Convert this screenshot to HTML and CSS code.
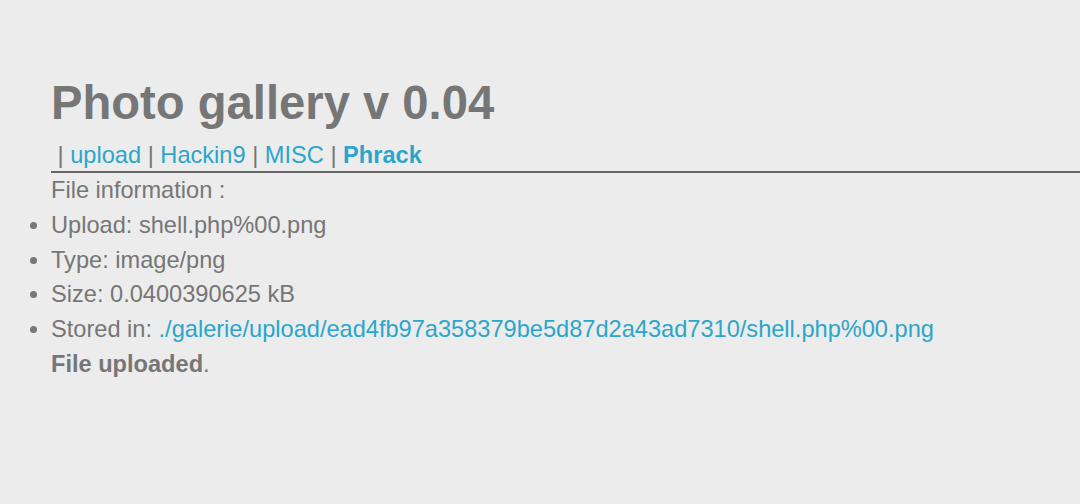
FILE: index.html
```html
<!DOCTYPE html>
<html>
<head>
<meta charset="utf-8">
<link rel="stylesheet" href="styles.css">
<title>Photo gallery</title>
</head>
<body>
<div class="page">
  <h1 class="title">Photo gallery v 0.04</h1>
  <div class="nav">&nbsp;| <a href="#">upload</a> | <a href="#">Hackin9</a> | <a href="#">MISC</a> | <a href="#" class="active">Phrack</a></div>
  <div class="info">File information :</div>
  <ul class="list">
    <li>Upload: shell.php%00.png</li>
    <li>Type: image/png</li>
    <li>Size: 0.0400390625 kB</li>
    <li>Stored in: <a href="#">./galerie/upload/ead4fb97a358379be5d87d2a43ad7310/shell.php%00.png</a></li>
  </ul>
  <div class="done"><b>File uploaded</b>.</div>
</div>
</body>
</html>
```
FILE: styles.css
```css
html, body {
  margin: 0;
  padding: 0;
  background: #ececec;
}
body {
  font-family: "Liberation Sans", Arial, sans-serif;
  color: #767676;
  font-size: 23.6px;
  line-height: 34.75px;
}
.page {
  padding: 67px 0 0 51px;
}
a {
  color: #2ba6cb;
  text-decoration: none;
}
.title {
  margin: 0;
  font-size: 47.2px;
  line-height: 72px;
  font-weight: bold;
  color: #767676;
}
.nav {
  border-bottom: 2px solid #666;
  line-height: 32px;
}
.nav .active {
  font-weight: bold;
}
.list {
  margin: 0;
  padding: 0;
  list-style: disc outside;
}
```
